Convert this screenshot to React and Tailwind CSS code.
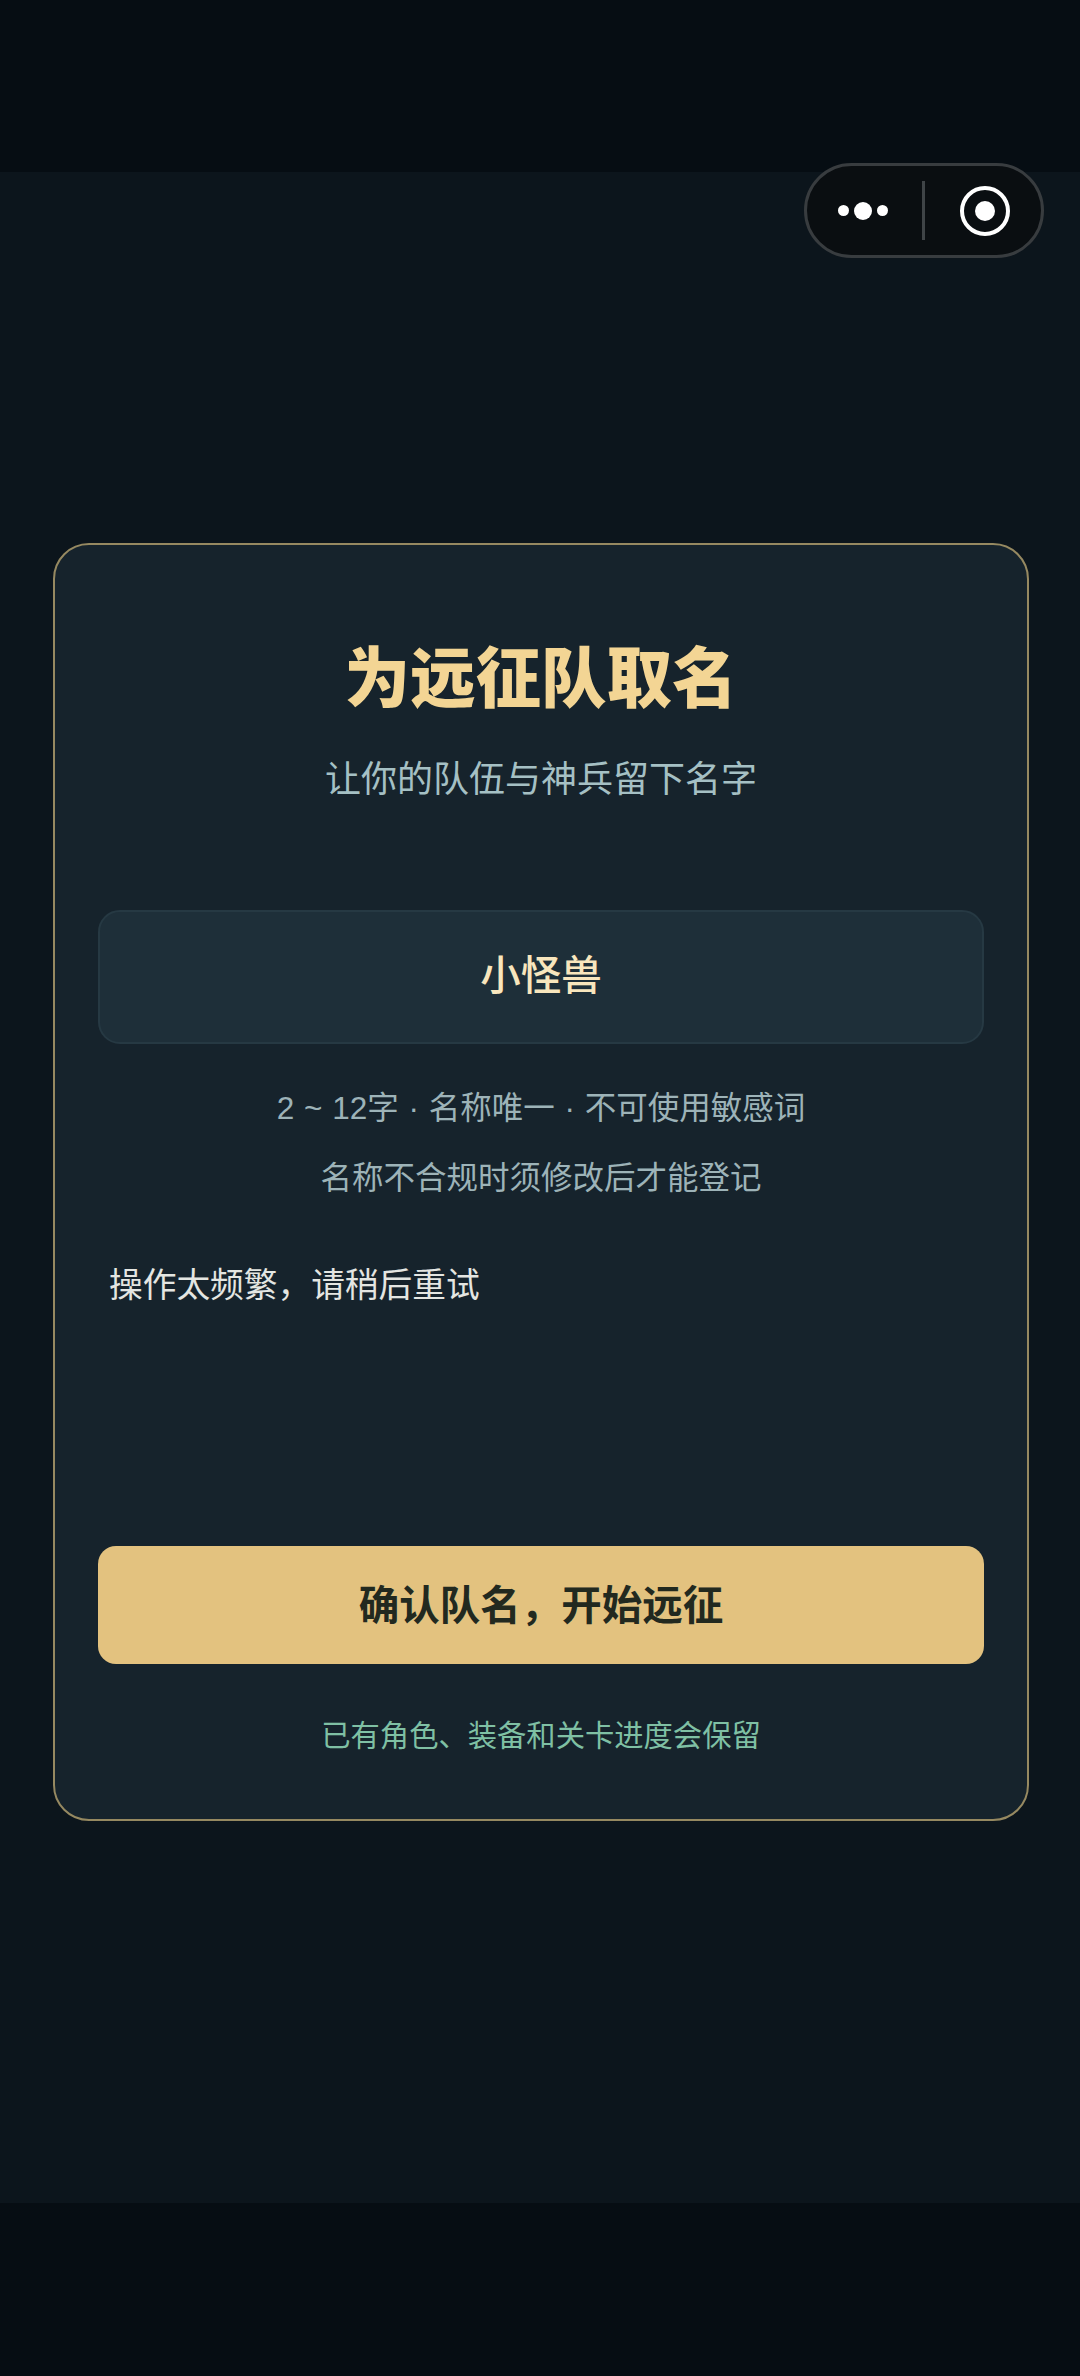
import React from "react";

const cjk = { fontFamily: '"Liberation Sans", "Noto Sans CJK SC", sans-serif' };

export default function App() {
  return (
    <div style={cjk} className="relative flex h-[2376px] w-[1080px] flex-col overflow-hidden bg-[#0c151c]">
      <div className="h-[172px] w-full shrink-0 bg-[#060d13]" />

      <div className="absolute left-[804px] top-[163px] flex h-[95px] w-[240px] items-center rounded-full border-[3px] border-[#383c3f] bg-[#0a0e11]">
        <div className="flex items-center gap-[5px] pl-[31px]">
          <span className="h-[11px] w-[11px] rounded-full bg-white" />
          <span className="h-[18px] w-[18px] rounded-full bg-white" />
          <span className="h-[11px] w-[11px] rounded-full bg-white" />
        </div>
        <div className="ml-[34px] h-[59px] w-[3px] bg-[#3f4447]" />
        <div className="ml-[35px] flex h-[50px] w-[50px] items-center justify-center rounded-full border-[4px] border-white">
          <span className="h-[20px] w-[20px] rounded-full bg-white" />
        </div>
      </div>

      <main className="flex-1 px-[53px] pt-[371px]">
        <section className="flex h-[1278px] w-[976px] flex-col items-center rounded-[36px] border-2 border-[#968961] bg-[#16232c] px-[43px] pt-[97px]">
          <h1 className="text-[65.5px] font-black leading-[76px] text-[#f3d594]">为远征队取名</h1>
          <p className="mt-[38px] text-[36px] leading-[48px] text-[#a5c0c4]">让你的队伍与神兵留下名字</p>

          <div className="mt-[106px] flex h-[134px] w-[886px] shrink-0 items-center justify-center rounded-[22px] border-2 border-[#263943] bg-[#1e2f39]">
            <span className="-translate-y-px text-[40.5px] font-medium text-[#f8e6bd]">小怪兽</span>
          </div>

          <p className="mt-[42px] text-[31.5px] leading-[44px] text-[#9db3b8] [word-spacing:1px]">2 ~ 12字 · 名称唯一 · 不可使用敏感词</p>
          <p className="mt-[26px] text-[31.5px] leading-[44px] text-[#9db3b8]">名称不合规时须修改后才能登记</p>

          <p className="mt-[61px] w-full px-[11px] text-[33.7px] leading-[48px] text-[#e4e6e2]">操作太频繁，请稍后重试</p>

          <button className="mt-[237px] flex h-[118px] w-[886px] shrink-0 items-center justify-center rounded-[18px] bg-[#e3c27f] pt-[2px] text-[40.5px] font-bold text-[#22291f]">
            确认队名，开始远征
          </button>

          <p className="mt-[50px] text-[29.3px] leading-[44px] text-[#7fc0a4]">已有角色、装备和关卡进度会保留</p>
        </section>
      </main>

      <div className="h-[173px] w-full shrink-0 bg-[#060d13]" />
    </div>
  );
}
